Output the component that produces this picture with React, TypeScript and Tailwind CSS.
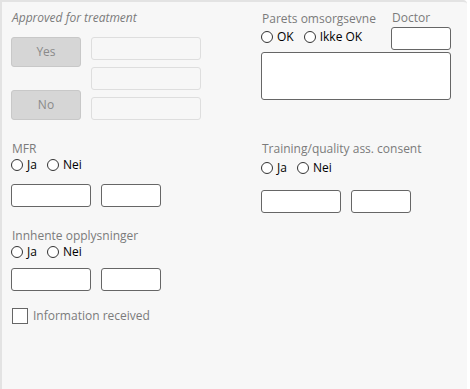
import React from 'react'

function Radio({ label }: { label: string }) {
  return (
    <label className="flex items-center gap-[4px] text-black">
      <span className="w-[12px] h-[12px] rounded-full border border-[#333] bg-white" />
      <span>{label}</span>
    </label>
  )
}

function Box({ w }: { w: string }) {
  return <div className={`${w} h-[23px] rounded-[3px] border border-[#666] bg-white`} />
}

export default function App() {
  return (
    <div className="w-[470px] h-[389px] bg-white font-['Open_Sans',sans-serif] text-[12px] leading-[16px]">
      <div className="w-[467px] h-[389px] bg-[#f7f7f7] border-l-2 border-t-2 border-[#e3e3e3] rounded-tr-[4px] flex">
        {/* left column */}
        <div className="w-[259px] pl-[9px] pt-[8px] flex flex-col">
          <div className="pl-[1px] italic text-[#7b7b7b]">Approved for treatment</div>
          <div className="mt-[11px] flex gap-[10px]">
            <div className="w-[70px] h-[83px] flex flex-col justify-between">
              <button className="h-[30px] rounded-[3px] border border-[#c8c8c8] bg-[#d6d6d6] text-[#8a8a8a]">Yes</button>
              <button className="h-[30px] rounded-[3px] border border-[#c8c8c8] bg-[#d6d6d6] text-[#8a8a8a]">No</button>
            </div>
            <div className="w-[110px] flex flex-col gap-[7px]">
              <div className="h-[23px] rounded-[3px] border border-[#dedede]" />
              <div className="h-[23px] rounded-[3px] border border-[#dedede]" />
              <div className="h-[23px] rounded-[3px] border border-[#dedede]" />
            </div>
          </div>

          <div className="mt-[21px] pl-[1px] text-[#7b7b7b]">MFR</div>
          <div className="flex gap-[10px] h-[16px]">
            <Radio label="Ja" />
            <Radio label="Nei" />
          </div>
          <div className="mt-[11px] flex gap-[10px]">
            <Box w="w-[80px]" />
            <Box w="w-[60px]" />
          </div>

          <div className="mt-[21px] pl-[1px] text-[#7b7b7b]">Innhente opplysninger</div>
          <div className="flex gap-[10px] h-[16px]">
            <Radio label="Ja" />
            <Radio label="Nei" />
          </div>
          <div className="mt-[8px] flex gap-[10px]">
            <Box w="w-[80px]" />
            <Box w="w-[60px]" />
          </div>

          <label className="mt-[17px] flex items-center gap-[5px] text-[#7b7b7b]">
            <span className="ml-[1px] w-[16px] h-[16px] border border-[#666] bg-white" />
            <span>Information received</span>
          </label>
        </div>

        {/* right column */}
        <div className="flex-1 pt-[8px] flex flex-col">
          <div className="flex">
            <div className="w-[130px] pt-[1px]">
              <div className="pl-[1px] text-[#7b7b7b]">Parets omsorgsevne</div>
              <div className="mt-[2px] flex gap-[10px] h-[16px]">
                <Radio label="OK" />
                <Radio label="Ikke OK" />
              </div>
            </div>
            <div>
              <div className="pl-[1px] text-[#7b7b7b]">Doctor</div>
              <div className="mt-[1px] w-[60px] h-[23px] rounded-[3px] border border-[#666] bg-white" />
            </div>
          </div>
          <div className="mt-[2px] w-[190px] h-[48px] rounded-[3px] border border-[#666] bg-white" />

          <div className="mt-[41px] pl-[1px] text-[#7b7b7b]">Training/quality ass. consent</div>
          <div className="mt-[3px] flex gap-[10px] h-[16px]">
            <Radio label="Ja" />
            <Radio label="Nei" />
          </div>
          <div className="mt-[14px] flex gap-[10px]">
            <Box w="w-[80px]" />
            <Box w="w-[60px]" />
          </div>
        </div>
      </div>
    </div>
  )
}
